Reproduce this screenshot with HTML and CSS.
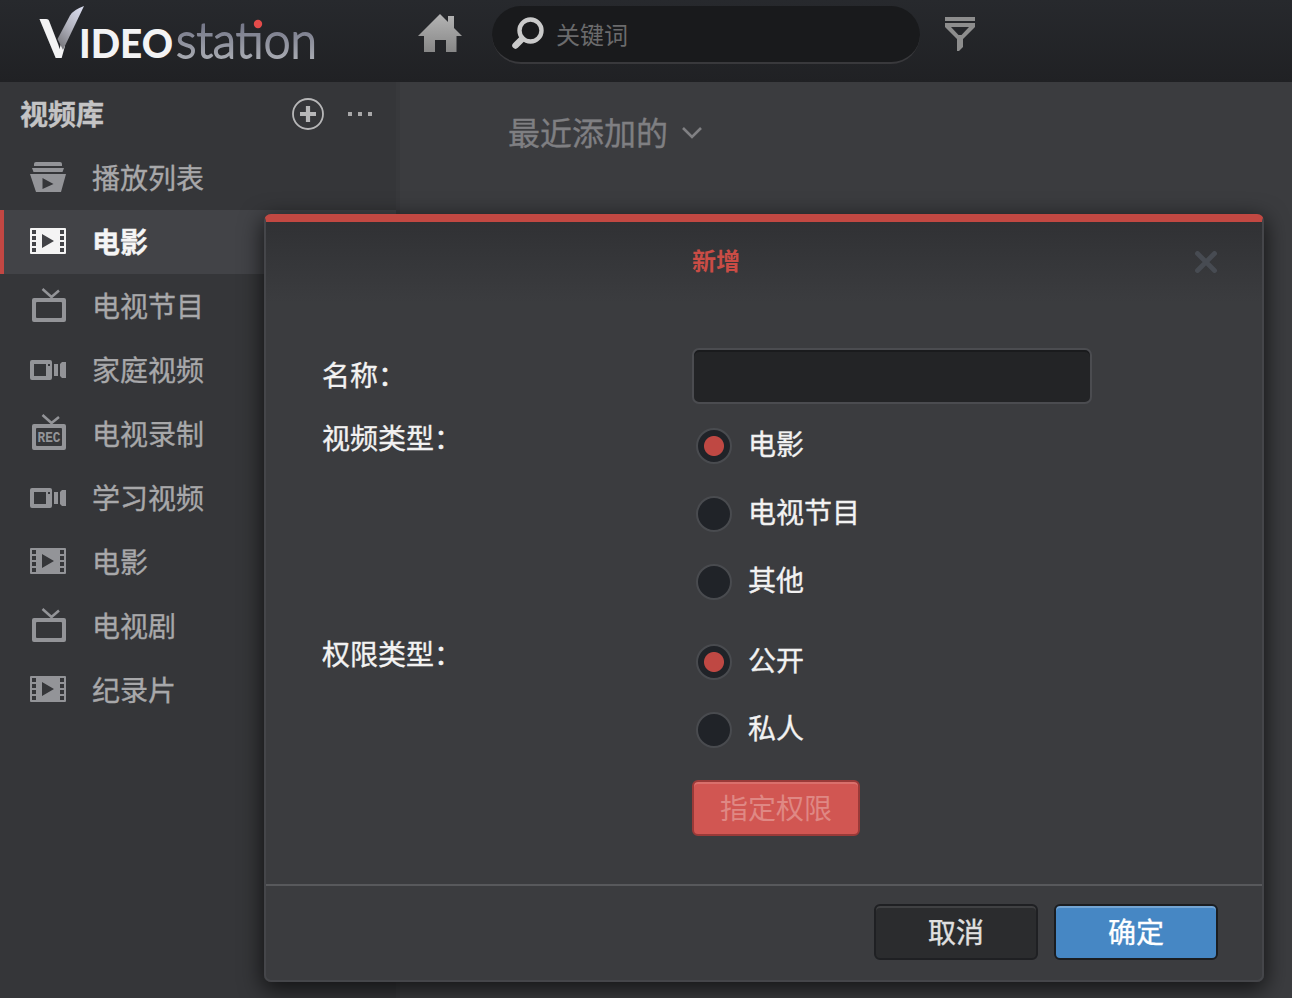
FILE: index.html
```
<!DOCTYPE html>
<html lang="zh-CN">
<head>
<meta charset="utf-8">
<title>Video Station</title>
<link rel="stylesheet" href="styles.css">
</head>
<body>
<svg class="defs" width="0" height="0">
  <defs>
    <linearGradient id="homeFill" x1="0" y1="0" x2="0" y2="1"><stop offset="0" stop-color="#b4b4b4"/><stop offset="1" stop-color="#878787"/></linearGradient>
    <symbol id="playlist" viewBox="0 0 40 40">
      <path d="M6 4h24q2 0 2 2v2H4V6q0-2 2-2zM2 10h32l-1.500 4h-29z"/>
      <path fill-rule="evenodd" d="M0 16h36l-5 18H6zM12.500 20v11l11-5z"/>
    </symbol>
    <symbol id="film" viewBox="0 0 40 40">
      <path fill-rule="evenodd" d="M1 6h34q1 0 1 1v24q0 1-1 1H1q-1 0-1-1V7q0-1 1-1zM2 8v4h4V8zM2 14v4h4v-4zM2 20v4h4v-4zM2 26v4h4v-4zM30 8v4h4V8zM30 14v4h4v-4zM30 20v4h4v-4zM30 26v4h4v-4zM12 12v14l12-7z"/>
    </symbol>
    <symbol id="tv" viewBox="0 0 40 40">
      <path fill-rule="evenodd" d="M4 12h30q2 0 2 2v20q0 2-2 2H4q-2 0-2-2V14q0-2 2-2zM7 16q-1 0-1 1v14q0 1 1 1h24q1 0 1-1V17q0-1-1-1z"/>
      <path d="M12.500 3l9 8 7.500-6.500" fill="none" stroke="currentColor" stroke-width="2.500"/>
    </symbol>
    <symbol id="camera" viewBox="0 0 40 40">
      <path fill-rule="evenodd" d="M2 10h18q2 0 2 2v16q0 2-2 2H2q-2 0-2-2V12q0-2 2-2zM4 14v12h12V14zM18 14v2h2v-2z"/>
      <path d="M24 14h4v12h-4zM30 14l2-2h4v16h-4l-2-2z"/>
    </symbol>
    <symbol id="rec" viewBox="0 0 40 40">
      <path fill-rule="evenodd" d="M4 10h30q2 0 2 2v22q0 2-2 2H4q-2 0-2-2V12q0-2 2-2zM7 14q-1 0-1 1v16q0 1 1 1h24q1 0 1-1V15q0-1-1-1z"/>
      <path d="M12.500 1l9 8 7.500-6" fill="none" stroke="currentColor" stroke-width="2.500"/>
      <text x="7.500" y="28" font-family="Liberation Mono, monospace" font-size="15" font-weight="700" textLength="23" lengthAdjust="spacingAndGlyphs">REC</text>
    </symbol>
  </defs>
</svg>
<header class="topbar">
  <svg class="logo" width="290" height="64" viewBox="0 0 290 64" role="img" aria-label="VideoStation">
    <defs>
      <linearGradient id="station" x1="0" y1="0" x2="0" y2="1"><stop offset="0.300" stop-color="#77798a"/><stop offset="1" stop-color="#b6b9bd"/></linearGradient>
      <linearGradient id="swoosh" x1="0.800" y1="0" x2="0.200" y2="1"><stop offset="0" stop-color="#d8dbed"/><stop offset="0.500" stop-color="#b3b4bf"/><stop offset="1" stop-color="#77777c"/></linearGradient>
      <clipPath id="initialClip"><path d="M0 0h38v34l7 12l-5 18H0z"/></clipPath>
    </defs>
    <g clip-path="url(#initialClip)"><text class="logo-initial" x="20" y="58" textLength="39" lengthAdjust="spacingAndGlyphs">V</text></g>
    <path d="M64 6L43 50L37.500 39L50 15.500Q53 10 64 6z" fill="url(#swoosh)"/>
    <text class="logo-bold" x="59" y="58" textLength="94" lengthAdjust="spacingAndGlyphs">IDEO</text>
    <text class="logo-light" x="156" y="57.500" fill="url(#station)" textLength="141" lengthAdjust="spacingAndGlyphs">statıon</text>
    <circle cx="238" cy="24" r="4.200" fill="#e34b4a"/>
  </svg>
  <svg class="home" width="44" height="38" viewBox="0 0 44 38"><path fill="url(#homeFill)" d="M22 0l8 8V2h6v12l8 8h-5.500v16H28V26H17v12H6V22H0z"/></svg>
  <label class="search">
    <svg width="34" height="34" viewBox="0 0 34 34" fill="none" stroke="#cacaca"><circle cx="20.500" cy="13.500" r="11" stroke-width="4.400"/><path d="M12 22l-6.500 6.500" stroke-width="6.500" stroke-linecap="round"/></svg>
    <span>关键词</span>
  </label>
  <svg class="filter" width="30" height="34" viewBox="0 0 30 34" fill="#8d8d8d"><path d="M0 0h30v4H0z"/><path fill-rule="evenodd" d="M0 6h30v4L18 22v8l-4 4h-2V22L0 10zM6 10l7.500 8h3l7.500-8z"/></svg>
</header>
<main class="workspace">
  <aside class="sidebar">
    <div class="sidebar-head">
      <h1>视频库</h1>
      <svg width="32" height="32" viewBox="0 0 32 32" fill="none" stroke="#b7b7b8"><circle cx="16" cy="16" r="15" stroke-width="1.800"/><path d="M8 16h16M16 8v16" stroke-width="4.200"/></svg>
      <svg class="more" width="24" height="4" viewBox="0 0 24 4" fill="#a8a8a9"><path d="M0 0h4v4H0zM10 0h4v4h-4zM20 0h4v4h-4z"/></svg>
    </div>
    <nav>
      <a class="item"><svg class="icon"><use href="#playlist"/></svg><span>播放列表</span></a>
      <a class="item active"><svg class="icon"><use href="#film"/></svg><span>电影</span></a>
      <a class="item"><svg class="icon"><use href="#tv"/></svg><span>电视节目</span></a>
      <a class="item"><svg class="icon"><use href="#camera"/></svg><span>家庭视频</span></a>
      <a class="item"><svg class="icon"><use href="#rec"/></svg><span>电视录制</span></a>
      <a class="item"><svg class="icon"><use href="#camera"/></svg><span>学习视频</span></a>
      <a class="item"><svg class="icon"><use href="#film"/></svg><span>电影</span></a>
      <a class="item"><svg class="icon"><use href="#tv"/></svg><span>电视剧</span></a>
      <a class="item"><svg class="icon"><use href="#film"/></svg><span>纪录片</span></a>
    </nav>
  </aside>
  <section class="content">
    <h2><span>最近添加的</span><svg width="20" height="14" viewBox="0 0 20 14" fill="none" stroke="#808083" stroke-width="2.600"><path d="M1 2l9 9 9-9"/></svg></h2>
  </section>
</main>
<div class="dialog" role="dialog">
  <div class="dialog-head">
    <span>新增</span>
    <svg class="close" width="22" height="22" viewBox="0 0 22 22"><path d="M2.500 2.500l17 17M19.500 2.500l-17 17" stroke="#474b52" stroke-width="4.800" stroke-linecap="round"/></svg>
  </div>
  <div class="dialog-body">
    <div class="row name-row"><span class="label">名称：</span><input type="text" aria-label="名称"></div>
    <div class="row"><span class="label">视频类型：</span>
      <div class="options">
        <label><i class="radio checked"></i><span>电影</span></label>
        <label><i class="radio"></i><span>电视节目</span></label>
        <label><i class="radio"></i><span>其他</span></label>
      </div>
    </div>
    <div class="row"><span class="label">权限类型：</span>
      <div class="options">
        <label><i class="radio checked"></i><span>公开</span></label>
        <label><i class="radio"></i><span>私人</span></label>
        <button class="btn assign">指定权限</button>
      </div>
    </div>
  </div>
  <div class="dialog-foot"><button class="btn cancel">取消</button><button class="btn ok">确定</button></div>
</div>
</body>
</html>
```
FILE: styles.css
```
* { box-sizing: border-box; }
body {
  margin: 0;
  width: 1292px;
  height: 998px;
  overflow: hidden;
  position: relative;
  background: #3b3c3f;
  font-family: "Noto Sans CJK SC", sans-serif;
  font-size: 28px;
  line-height: 40px;
  -webkit-text-stroke: 0.35px currentColor;
}
svg { display: block; flex: none; -webkit-text-stroke: 0; }
.defs { position: absolute; }
.topbar {
  display: flex;
  align-items: flex-start;
  height: 82px;
  padding-left: 20px;
  background: linear-gradient(#27292d, #202124);
}
.logo { margin-right: 108px; overflow: visible; }
.logo-initial { font: 900 53px Lato, sans-serif; fill: #f3f3f4; }
.logo-bold { font: 900 40px Lato, sans-serif; fill: #f3f3f4; }
.logo-light { font: 300 50px Lato, sans-serif; stroke: url(#station); stroke-width: 1.8px; }
.home { margin: 14px 30px 0 0; }
.search {
  display: flex;
  align-items: center;
  width: 428px;
  height: 58px;
  margin-top: 6px;
  padding-left: 18px;
  gap: 12px;
  border-radius: 29px;
  background: #191a1c;
  border-bottom: 2px solid #39393c;
  color: #6b6b6c;
  font-size: 24px;
  -webkit-text-stroke: 0;
}
.filter { margin: 17px 0 0 25px; }
.workspace { display: flex; height: 916px; }
.sidebar {
  width: 400px;
  background: #353639;
  border-right: 4px solid #38393c;
}
.sidebar-head {
  display: flex;
  align-items: center;
  height: 64px;
  padding: 0 24px 0 20px;
}
h1 { margin: 0 auto 0 0; padding-bottom: 3px; color: #c4c4c5; font-size: 28px; line-height: 40px; font-weight: 700; }
.more { margin-left: 24px; }
.item {
  display: flex;
  align-items: center;
  height: 64px;
  padding-left: 30px;
  color: #a8a8aa;
}
.item span { padding-bottom: 3px; }
.icon { width: 40px; height: 40px; margin-right: 22px; color: #939498; fill: currentColor; }
.active {
  background: #424347;
  border-left: 4px solid #c24743;
  padding-left: 26px;
  color: #f5f5f5;
  font-weight: 700;
}
.active .icon { color: #f4f4f4; }
.content { flex: 1; padding: 27px 0 0 108px; }
h2 {
  display: flex;
  align-items: center;
  gap: 14px;
  margin: 0;
  height: 48px;
  color: #7f7f82;
  font-size: 32px;
  font-weight: 400;
}
h2 span { padding-bottom: 5px; }
.dialog {
  position: absolute;
  left: 264px;
  top: 214px;
  display: flex;
  flex-direction: column;
  width: 1000px;
  height: 768px;
  border: 2px solid #45464a;
  border-top: 8px solid #c24842;
  border-radius: 7px;
  background: linear-gradient(#303134, #3b3c3f 80px);
  box-shadow: 0 6px 22px 2px rgba(0, 0, 0, 0.65);
  color: #f2f2f2;
}
.dialog-head {
  display: flex;
  align-items: center;
  justify-content: space-between;
  height: 80px;
  padding: 0 45px 0 426px;
  color: #ca4c45;
  font-size: 24px;
}
.dialog-head span { padding-bottom: 4px; font-weight: 700; -webkit-text-stroke: 0; }
.dialog-body { flex: 1; padding: 46px 56px 0; }
.row { display: flex; align-items: flex-start; height: 216px; }
.label { width: 370px; margin-top: -7px; }
.name-row { height: 76px; }
.name-row .label { margin-top: 6px; }
input {
  width: 400px;
  height: 56px;
  border: 2px solid #4b4c50;
  border-radius: 7px;
  background: #232426;
  box-shadow: inset 0 2px 0 #1a1b1d;
}
.options { display: flex; flex-direction: column; gap: 28px; padding-left: 4px; }
.options label { display: flex; align-items: center; height: 40px; gap: 16px; line-height: 36px; }
.options span { padding-bottom: 2px; }
.radio {
  width: 36px;
  height: 36px;
  border: 2px solid #494b4f;
  border-radius: 50%;
  background: #202328;
  margin-top: 3px;
}
.checked { background: radial-gradient(circle, #bf4843 9.500px, #202328 10.500px); }
.btn {
  height: 56px;
  padding: 0 0 2px;
  border-radius: 6px;
  font: inherit;
  -webkit-text-stroke: inherit;
}
.assign {
  width: 168px;
  margin: 4px 0 0 -4px;
  border: 2px solid #9a3a38;
  background: #d15652;
  box-shadow: inset 0 2px 0 #d9706c;
  color: #df8884;
  -webkit-text-stroke: 0;
}
.dialog-foot {
  display: flex;
  justify-content: flex-end;
  gap: 16px;
  height: 96px;
  padding: 18px 44px 0;
  border-top: 2px solid #58595c;
}
.cancel, .ok { width: 164px; }
.cancel { border: 2px solid #1f2023; background: #2b2c2e; box-shadow: inset 0 2px 0 #404143; color: #e0e0e0; }
.ok { border: 2px solid #1b1d20; background: #4687c4; box-shadow: inset 0 2px 0 #74a5d3; color: #fff; }
```
